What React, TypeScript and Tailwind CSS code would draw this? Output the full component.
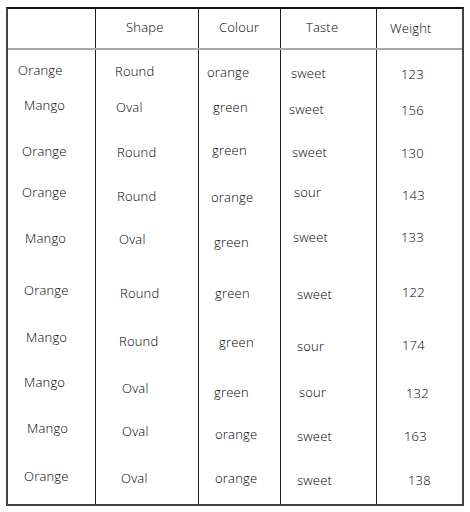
type Cell = [string, string];

const header: Cell[] = [
  ['', 'pl-[10px] pt-[10px]'],
  ['Shape', 'pl-[30px] pt-[10px]'],
  ['Colour', 'pl-[20px] pt-[10px]'],
  ['Taste', 'pl-[25px] pt-[10px]'],
  ['Weight', 'pl-[13px] pt-[11px]'],
];

// rows are hand-placed, like the sketch they copy
const rows: { h: string; cells: Cell[] }[] = [
  {
    h: 'h-[45px]',
    cells: [
      ['Orange', 'pl-[10px] pt-[12px]'],
      ['Round', 'pl-[19px] pt-[13px]'],
      ['orange', 'pl-[8px] pt-[14px]'],
      ['sweet', 'pl-[10px] pt-[15px]'],
      ['123', 'pl-[24px] pt-[16px]'],
    ],
  },
  {
    h: 'h-[45px]',
    cells: [
      ['Mango', 'pl-[16px] pt-[2px]'],
      ['Oval', 'pl-[20px] pt-[4px]'],
      ['green', 'pl-[14px] pt-[4px]'],
      ['sweet', 'pl-[8px] pt-[6px]'],
      ['156', 'pl-[24px] pt-[7px]'],
    ],
  },
  {
    h: 'h-[42px]',
    cells: [
      ['Orange', 'pl-[14px] pt-[3px]'],
      ['Round', 'pl-[21px] pt-[4px]'],
      ['green', 'pl-[13px] pt-[2px]'],
      ['sweet', 'pl-[11px] pt-[4px]'],
      ['130', 'pl-[24px] pt-[5px]'],
    ],
  },
  {
    h: 'h-[45px]',
    cells: [
      ['Orange', 'pl-[14px] pt-[2px]'],
      ['Round', 'pl-[21px] pt-[6px]'],
      ['orange', 'pl-[12px] pt-[7px]'],
      ['sour', 'pl-[13px] pt-[2px]'],
      ['143', 'pl-[25px] pt-[5px]'],
    ],
  },
  {
    h: 'h-[53px]',
    cells: [
      ['Mango', 'pl-[17px] pt-[3px]'],
      ['Oval', 'pl-[23px] pt-[4px]'],
      ['green', 'pl-[15px] pt-[7px]'],
      ['sweet', 'pl-[12px] pt-[2px]'],
      ['133', 'pl-[24px] pt-[2px]'],
    ],
  },
  {
    h: 'h-[47px]',
    cells: [
      ['Orange', 'pl-[16px] pt-[2px]'],
      ['Round', 'pl-[24px] pt-[5px]'],
      ['green', 'pl-[16px] pt-[5px]'],
      ['sweet', 'pl-[16px] pt-[6px]'],
      ['122', 'pl-[25px] pt-[4px]'],
    ],
  },
  {
    h: 'h-[45px]',
    cells: [
      ['Mango', 'pl-[18px] pt-[2px]'],
      ['Round', 'pl-[23px] pt-[6px]'],
      ['green', 'pl-[20px] pt-[7px]'],
      ['sour', 'pl-[16px] pt-[11px]'],
      ['174', 'pl-[25px] pt-[10px]'],
    ],
  },
  {
    h: 'h-[46px]',
    cells: [
      ['Mango', 'pl-[16px] pt-[2px]'],
      ['Oval', 'pl-[26px] pt-[8px]'],
      ['green', 'pl-[15px] pt-[12px]'],
      ['sour', 'pl-[18px] pt-[12px]'],
      ['132', 'pl-[29px] pt-[13px]'],
    ],
  },
  {
    h: 'h-[48px]',
    cells: [
      ['Mango', 'pl-[19px] pt-[2px]'],
      ['Oval', 'pl-[26px] pt-[5px]'],
      ['orange', 'pl-[16px] pt-[8px]'],
      ['sweet', 'pl-[16px] pt-[10px]'],
      ['163', 'pl-[27px] pt-[10px]'],
    ],
  },
  {
    h: 'h-[38px]',
    cells: [
      ['Orange', 'pl-[16px] pt-[2px]'],
      ['Oval', 'pl-[25px] pt-[4px]'],
      ['orange', 'pl-[16px] pt-[4px]'],
      ['sweet', 'pl-[16px] pt-[6px]'],
      ['138', 'pl-[31px] pt-[6px]'],
    ],
  },
];

const cols = 'grid grid-cols-[87px_103px_82px_96px_86px]';
const divider = 'border-l-[1.5px] border-[#1f1f1f]';

function Row({ cells, className }: { cells: Cell[]; className: string }) {
  return (
    <div className={`${cols} ${className}`}>
      {cells.map(([text, pos], i) => (
        <div key={i} className={`${i > 0 ? divider : ''} ${pos} whitespace-nowrap`}>
          {text}
        </div>
      ))}
    </div>
  );
}

export default function App() {
  return (
    <div className="h-[512px] w-[470px] bg-white pt-[7px] pl-[6px] font-['Open_Sans',sans-serif] text-[13px] font-light leading-4 tracking-[0.2px] text-black">
      <div className="w-[458px] border-2 border-[#444] border-t-[#111]">
        <div className="border-b-2 border-[#a8a8a8]">
          <Row cells={header} className="h-[39px]" />
        </div>
        {rows.map((r, i) => (
          <Row key={i} cells={r.cells} className={r.h} />
        ))}
      </div>
    </div>
  );
}
